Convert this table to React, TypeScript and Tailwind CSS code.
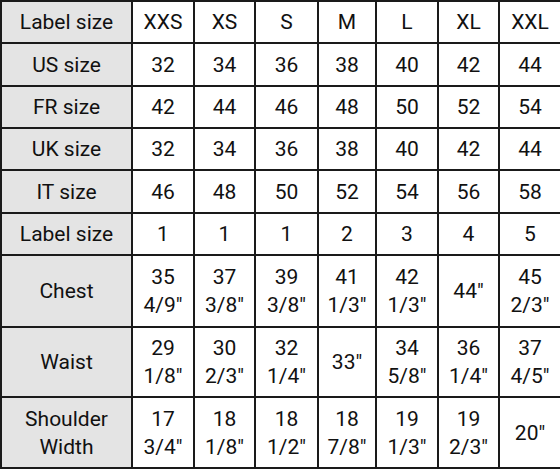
import React from "react";

const cols = ["XXS", "XS", "S", "M", "L", "XL", "XXL"];
const rows: { label: string[]; vals: string[][]; h: string }[] = [
  { label: ["US size"], vals: [["32"], ["34"], ["36"], ["38"], ["40"], ["42"], ["44"]], h: "h-[43px]" },
  { label: ["FR size"], vals: [["42"], ["44"], ["46"], ["48"], ["50"], ["52"], ["54"]], h: "h-[42px]" },
  { label: ["UK size"], vals: [["32"], ["34"], ["36"], ["38"], ["40"], ["42"], ["44"]], h: "h-[42px]" },
  { label: ["IT size"], vals: [["46"], ["48"], ["50"], ["52"], ["54"], ["56"], ["58"]], h: "h-[43px]" },
  { label: ["Label size"], vals: [["1"], ["1"], ["1"], ["2"], ["3"], ["4"], ["5"]], h: "h-[42px]" },
  {
    label: ["Chest"],
    vals: [["35", '4/9"'], ["37", '3/8"'], ["39", '3/8"'], ["41", '1/3"'], ["42", '1/3"'], ['44"'], ["45", '2/3"']],
    h: "h-[72px]",
  },
  {
    label: ["Waist"],
    vals: [["29", '1/8"'], ["30", '2/3"'], ["32", '1/4"'], ['33"'], ["34", '5/8"'], ["36", '1/4"'], ["37", '4/5"']],
    h: "h-[70px]",
  },
  {
    label: ["Shoulder", "Width"],
    vals: [["17", '3/4"'], ["18", '1/8"'], ["18", '1/2"'], ["18", '7/8"'], ["19", '1/3"'], ["19", '2/3"'], ['20"']],
    h: "h-[71px]",
  },
];

const cell = "border-2 border-[#1a1a1a] text-center align-middle p-0 leading-[28px]";

export default function App() {
  return (
    <div className="w-[560px] h-[471px] bg-white text-[#111] font-['Roboto',sans-serif] text-[21px]">
      <table className="table-fixed border-collapse w-[560px]">
        <colgroup>
          <col className="w-[131px]" />
          <col className="w-[62px]" />
          <col className="w-[61px]" />
          <col className="w-[63px]" />
          <col className="w-[58px]" />
          <col className="w-[62px]" />
          <col className="w-[61px]" />
          <col className="w-[62px]" />
        </colgroup>
        <tbody>
          <tr className="h-[42px]">
            <td className={`${cell} bg-[#e4e4e4]`}>Label size</td>
            {cols.map((c) => (
              <td key={c} className={cell}>
                {c}
              </td>
            ))}
          </tr>
          {rows.map((r, i) => (
            <tr key={i} className={r.h}>
              <td className={`${cell} bg-[#e4e4e4]`}>
                {r.label.map((l, j) => (
                  <div key={j}>{l}</div>
                ))}
              </td>
              {r.vals.map((v, j) => (
                <td key={j} className={cell}>
                  {v.map((t, k) => (
                    <div key={k}>{t}</div>
                  ))}
                </td>
              ))}
            </tr>
          ))}
        </tbody>
      </table>
    </div>
  );
}
